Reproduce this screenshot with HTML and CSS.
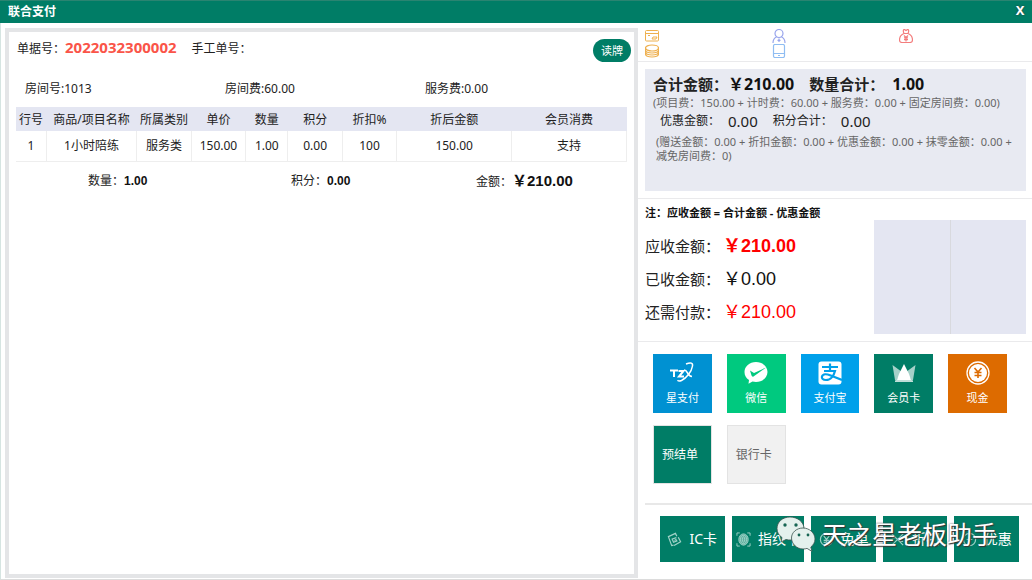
FILE: index.html
```html
<!DOCTYPE html>
<html lang="zh-CN">
<head>
<meta charset="utf-8">
<title>联合支付</title>
<link rel="stylesheet" href="styles.css">
</head>
<body>
<header class="titlebar">
  <h1 class="title">联合支付</h1>
  <button class="close" type="button" aria-label="关闭">X</button>
</header>
<main class="main">
  <section class="order">
    <div class="order-head">
      <span>单据号：</span><strong class="order-no">2022032300002</strong><span>手工单号：</span>
      <button class="read-card" type="button">读牌</button>
    </div>
    <div class="room">
      <span>房间号:1013</span><span>房间费:60.00</span><span>服务费:0.00</span>
    </div>
    <table class="items">
      <colgroup><col class="c-no"><col class="c-name"><col class="c-mid"><col class="c-mid"><col class="c-qty"><col class="c-mid"><col class="c-mid"><col class="c-wide"><col class="c-wide"></colgroup>
      <thead><tr><th>行号</th><th>商品/项目名称</th><th>所属类别</th><th>单价</th><th>数量</th><th>积分</th><th>折扣%</th><th>折后金额</th><th>会员消费</th></tr></thead>
      <tbody><tr><td>1</td><td>1小时陪练</td><td>服务类</td><td>150.00</td><td>1.00</td><td>0.00</td><td>100</td><td>150.00</td><td>支持</td></tr></tbody>
    </table>
    <div class="sums">
      <span>数量：<b>1.00</b></span><span>积分：<b>0.00</b></span><span>金额：<b class="sum-money">￥210.00</b></span>
    </div>
  </section>
  <aside class="pay">
    <div class="member">
      <svg class="ico" viewBox="0 0 14 14" fill="none" stroke="#eeb04f"><rect x=".5" y="1.500" width="13" height="10.500" rx="1"/><path d="M.5 4.500h13M3 6.500h2M7 10l1-2h4l-1 2z"/></svg>
      <svg class="ico" viewBox="0 0 14 14" fill="none" stroke="#98a5ec" stroke-width="1.200"><circle cx="7" cy="4.500" r="4"/><path d="M1 14c0-3 1-5 3.500-6M13 14c0-3-1-5-3.500-6M7 9.500v3.500M5.500 11.300h3"/></svg>
      <svg class="ico" viewBox="0 0 14 14" fill="none" stroke="#f37d7d" stroke-width="1.200"><path d="M5 4.500C4 2.500 4 .5 5.500.5l1.500 1 1.500-1C10 .5 10 2.500 9 4.500zM5 4.500C1.500 6 .5 8.500.5 11c0 2 1 2.500 2.500 2.500h8c1.500 0 2.500-.5 2.500-2.500 0-2.500-1-5-4.500-6.500M5 6.500l2 2 2-2M7 8.500v4M5 8.800h4M5 10.700h4"/></svg>
      <svg class="ico" viewBox="0 0 14 14" fill="none" stroke="#eeb04f" stroke-width="1.200"><ellipse cx="7" cy="4" rx="6.500" ry="3"/><path d="M.5 4v6c0 4 13 4 13 0V4M.5 6c0 4 13 4 13 0M.5 8c0 4 13 4 13 0"/></svg>
      <svg class="ico" viewBox="0 0 14 14" fill="none" stroke="#8fbdf2" stroke-width="1.200"><rect x="1.500" y=".5" width="11" height="13" rx="1.500"/><path d="M1.500 9.500h11M6 11.500h2"/></svg>
    </div>
    <div class="section">
      <div class="totals">
        <div class="total-main"><b>合计金额：</b><b class="num">￥210.00</b><b class="next">数量合计：</b><b class="num gap">1.00</b></div>
        <p class="formula">(项目费：150.00 + 计时费：60.00 + 服务费：0.00 + 固定房间费：0.00)</p>
        <div class="total-sub"><span>优惠金额：</span><span class="subnum">0.00</span><span class="next">积分合计：</span><span class="subnum">0.00</span></div>
        <p class="formula inset">(赠送金额：0.00 + 折扣金额：0.00 + 优惠金额：0.00 + 抹零金额：0.00 + 减免房间费：0)</p>
      </div>
    </div>
    <div class="section due">
      <p class="note">注：应收金额 = 合计金额 - 优惠金额</p>
      <div class="due-body">
        <dl class="amounts">
          <div><dt>应收金额：</dt><dd class="red bold">￥210.00</dd></div>
          <div><dt>已收金额：</dt><dd>￥0.00</dd></div>
          <div><dt>还需付款：</dt><dd class="red">￥210.00</dd></div>
        </dl>
        <div class="records"><div></div><div></div></div>
      </div>
    </div>
    <div class="section methods">
      <button type="button" class="tile star"><svg viewBox="0 0 24 24" fill="none" stroke="#fff"><path stroke-width="2" d="M0 9.500h8M4 9.500V16M8.500 10h5l-4.500 5.500h5"/><path stroke-width="1.700" d="M14 9c4 0 3 6 8 6.500"/><path stroke-width="1.500" d="M16 3c5-2 7-1 6.500 2-1 6-6 12-11 14.500-2 .8-3 .8-4-.3"/></svg>星支付</button>
      <button type="button" class="tile wechat"><svg viewBox="0 0 24 24"><path fill="#fff" d="M12 1C5.500 1 .5 5.500.5 11c0 3.500 1.500 6 4.500 8l-.5 3.800 4-2.300c1 .3 2.300.5 3.500.5 6.500 0 11.500-4.500 11.500-10S18.500 1 12 1z"/><path fill="#00c97f" d="M6 9.500l4 2.500L22 6.500 9.500 15.500c-1 .5-1.500 0-2-1z"/></svg>微信</button>
      <button type="button" class="tile alipay"><svg viewBox="0 0 24 24"><rect x=".5" y=".5" width="23" height="23" rx="3" fill="#fff"/><path fill="none" stroke="#00a0ea" stroke-width="2.200" d="M4 6h16M12 2.500V10M6 10h11c-1 4-4 9-9 9-3 0-4.500-1.500-4-3.500.8-3 5-2.500 8-1.300L24 19"/></svg>支付宝</button>
      <button type="button" class="tile vip"><svg viewBox="0 0 24 24" fill="#fff"><path d="M12 3l5 10 2 6H5l2-6z"/><path opacity=".65" d="M.5 4L10 11l-5 8H3zM23.500 4L14 11l5 8h2z"/><path opacity=".75" d="M3 19.500l9-3 9 3v1.500H3z"/></svg>会员卡</button>
      <button type="button" class="tile cash"><svg viewBox="0 0 24 24"><circle cx="12" cy="12" r="11" fill="none" stroke="#fff" stroke-width="1.300"/><circle cx="12" cy="12" r="9" fill="#fff"/><path fill="none" stroke="#dd6b00" stroke-width="1.600" d="M8.500 7L12 11l3.500-4M12 11v6M8.500 11.500h7M8.500 14.500h7"/></svg>现金</button>
      <button type="button" class="tile prebill">预结单</button>
      <button type="button" class="tile bank">银行卡</button>
    </div>
    <div class="actions">
      <button type="button"><svg viewBox="0 0 16 16" fill="none" stroke="#9fd2c7" stroke-width="1.300"><path d="M10.500 4.500L9 1.500 1.500 5 5 14.500l2-.5M12 5.500l2.500 5-7 4M10 6L5.500 7.500 7 11l3.500-1.500L9.500 8 8 9"/></svg>IC卡</button>
      <button type="button" class="wide"><svg viewBox="0 0 16 16" fill="none" stroke="#9fd2c7"><path d="M1 4V1h3M12 1h3v3M1 12v3h3M12 15h3v-3"/><ellipse cx="8" cy="8" rx="5" ry="6" fill="#5fb09f"/><ellipse cx="8" cy="8" rx="3.200" ry="4.500"/><ellipse cx="8" cy="8" rx="1.200" ry="3"/></svg>指纹卡</button>
      <button type="button"><svg viewBox="0 0 16 16" fill="none" stroke="#9fd2c7" stroke-width="1.300"><circle cx="8" cy="8" r="6.500"/><path d="M5 4l3 4 3-4M8 8v5M5 9h6M5 11h6"/></svg>免单</button>
      <button type="button"><svg viewBox="0 0 16 16" fill="none" stroke="#9fd2c7" stroke-width="1.300"><path d="M2 2l12 12M14 2L2 14M2 6h4M10 10h4"/></svg>折扣</button>
      <button type="button"><svg viewBox="0 0 16 16" fill="none" stroke="#9fd2c7" stroke-width="1.300"><circle cx="8" cy="8" r="6.500"/><path d="M5 8h6M8 5v6"/></svg>优惠</button>
      <div class="brand">
        <svg viewBox="0 0 40 36"><g stroke="#38534d" stroke-width=".8"><path fill="#e4f1ed" d="M14 1C6.500 1 1 6 1 12.500c0 4 2 7 5 9L5 26l5-2.500c2 .5 3 .5 5 .5 7 0 13-5 13-11.500S21.500 1 14 1z"/><path fill="#e4f1ed" d="M27 12c-6.500 0-11.500 4.500-11.500 10S20.500 33 27 33c1.500 0 3-.2 4-.6l5 3-1.200-4.400c2.500-2 4.200-4.500 4.200-8 0-6-5.500-11-12-11z"/></g><g fill="#176654"><circle cx="9" cy="9" r="1.700"/><circle cx="20" cy="9" r="1.700"/><circle cx="23" cy="19" r="1.400"/><circle cx="32" cy="19" r="1.400"/></g></svg>
        <span>天之星老板助手</span>
      </div>
    </div>
  </aside>
</main>
</body>
</html>
```

FILE: styles.css
```css
* { box-sizing: border-box; }

body {
  margin: 0;
  min-height: 100vh;
  display: flex;
  flex-direction: column;
  background: #fff;
  border-bottom: 1px solid #dcdcdc;
  color: #222;
  font: 12px/16px "Noto Sans", "Noto Sans CJK SC", sans-serif;
}

button {
  padding: 0;
  border: 0;
  color: #fff;
  font: inherit;
  cursor: pointer;
}

p, dl, dd, h1 { margin: 0; }

.titlebar {
  display: flex;
  justify-content: space-between;
  height: 23px;
  padding: 0 5px 0 8px;
  background: #007d66;
  border-top: 1px solid #2a8471;
  color: #fff;
}

.title { font-size: 12px; line-height: 22px; }

.close {
  width: 14px;
  height: 18px;
  background: none;
  font: bold 13px/18px "Noto Sans", sans-serif;
  text-shadow: 0 0 2px #333;
}

.main {
  flex: 1;
  display: grid;
  grid-template-columns: 637fr 394fr;
  border-left: 1px solid #d5e4e1;
}

.order {
  min-width: 0;
  margin: 5px 0 1px 4px;
  padding: 7px 7px 0;
  border: 4px solid #e4e5e7;
}

.order-head {
  display: flex;
  align-items: center;
  height: 23px;
  padding-left: 1px;
  line-height: 20px;
}

.order-head > span, .order-no { height: 24px; }

.order-no {
  margin-right: 15px;
  color: #fa5448;
  font-size: 15px;
  line-height: 16px;
}

.read-card {
  width: 38px;
  height: 23px;
  margin: 0 -4px 0 auto;
  border-radius: 12px;
  background: #007d66;
  font-size: 11px;
}

.room {
  display: grid;
  grid-template-columns: repeat(3, 200fr) 2fr;
  padding: 19px 0 10px 9px;
}

.items {
  width: 100%;
  table-layout: fixed;
  border-collapse: collapse;
  text-align: center;
}

.c-no { width: 5%; }
.c-name { width: 15%; }
.c-mid { width: 9%; }
.c-qty { width: 7%; }
.c-wide { width: 19%; }

.items th {
  height: 24px;
  padding: 2px 0 0;
  background: #e4e6f2;
  font-weight: normal;
  white-space: nowrap;
}

.items td {
  height: 30px;
  padding: 1px 0 0;
  border: 1px solid #eee;
  border-top: 0;
}

.items td:first-child { border-left: 0; }

.sums {
  display: grid;
  grid-template-columns: 203fr 185fr 151fr;
  align-items: center;
  padding: 11px 0 0 72px;
}

.sums b {
  color: #111;
  font-family: "Liberation Sans", "Noto Sans CJK SC", sans-serif;
}

.sums .sum-money { font-size: 15px; }

.pay { min-width: 0; }

.member {
  display: grid;
  grid-template-columns: repeat(3, 1fr);
  row-gap: 1px;
  padding: 6px 6px 3px 7px;
}

.ico { width: 14px; height: 14px; }

.section {
  padding: 7px 6px 7px 7px;
  border-top: 1px solid #eaeaec;
}

.totals {
  min-height: 122px;
  padding: 4px 8px;
  background: #e8eaf2;
}

.total-main, .total-sub {
  display: flex;
  align-items: center;
  white-space: nowrap;
}

.total-main { height: 21px; font-size: 15px; }
.num { color: #111; font-size: 16px; }
.next { margin-left: 15px; }
.gap { margin-left: 8px; }

.formula {
  color: #666;
  font-size: 11px;
  line-height: 14px;
  padding-top: 2px;
}

.total-sub { height: 22px; padding-left: 7px; }
.subnum { margin-left: 8px; font-size: 15px; }
.inset { padding: 3px 0 0 3px; }

.note {
  color: #111;
  font-size: 11px;
  font-weight: bold;
  line-height: 14px;
}

.due-body { display: flex; justify-content: space-between; }

.amounts { padding-top: 9px; }

.amounts > div {
  display: flex;
  align-items: center;
  height: 33px;
}

.amounts dt { font-size: 15px; }

.amounts dd {
  margin-left: 3px;
  color: #111;
  font: 18px/24px "Liberation Sans", "Noto Sans CJK SC", sans-serif;
}

.amounts .red { color: #f00; }
.amounts .bold { font-weight: bold; }

.records {
  display: grid;
  grid-template-columns: 1fr 1fr;
  width: 40%;
  height: 114px;
  background: #e4e6f2;
}

.records > div + div { border-left: 1px solid #d8d9de; }

.methods {
  display: grid;
  grid-template-columns: repeat(5, 1fr);
  gap: 12px 15px;
  padding: 12px 25px 19px 15px;
}

.tile {
  display: flex;
  flex-direction: column;
  align-items: center;
  justify-content: center;
  gap: 5px;
  height: 59px;
  font-size: 11px;
}

.tile svg { width: 24px; height: 24px; }

.star { background: #0091d2; }
.wechat { background: #00c97f; }
.alipay { background: #00a0ea; }
.vip { background: #007d66; }
.cash { background: #dd6b00; }

.prebill, .bank {
  padding-right: 5px;
  border: 1px solid #e3e3e3;
  font-size: 12px;
}

.prebill { background: #007d66; }

.bank {
  background: #f1f1f1;
  color: #666;
}

.actions {
  position: relative;
  display: flex;
  gap: 7px;
  margin-left: 7px;
  padding: 11px 13px 0 15px;
  border-top: 2px solid #e8e8e8;
}

.actions button {
  flex: 64 1 0;
  display: flex;
  align-items: center;
  justify-content: center;
  gap: 7px;
  height: 46px;
  background: #007d66;
  font-size: 14px;
  white-space: nowrap;
}

.actions .wide { flex-grow: 72; }
.actions button svg { width: 15px; height: 15px; }

.brand {
  position: absolute;
  top: 11px;
  left: 131px;
  display: flex;
  align-items: center;
  gap: 6px;
  color: #fff;
  font-size: 25px;
  line-height: 36px;
  white-space: nowrap;
  text-shadow: 1px 1px 1px #333, 0 0 2px #444;
}

.brand svg { width: 40px; height: 36px; }
```
